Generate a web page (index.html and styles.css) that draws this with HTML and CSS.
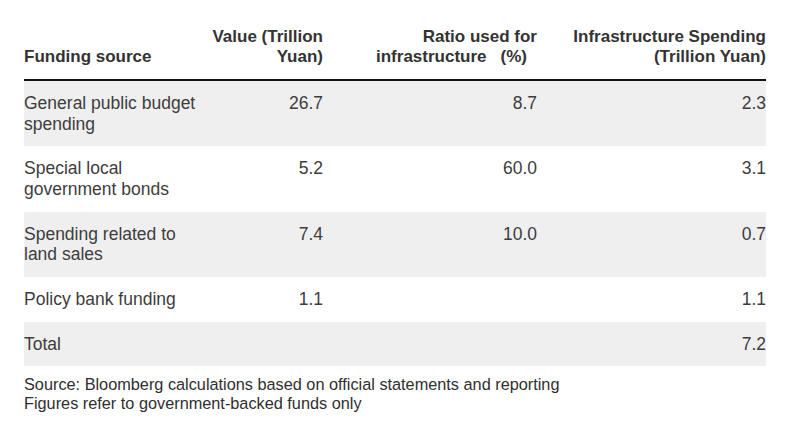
FILE: index.html
```html
<!DOCTYPE html>
<html>
<head>
<meta charset="utf-8">
<link rel="stylesheet" href="styles.css">
</head>
<body>
<div class="wrap">
  <div class="table">
    <div class="row head">
      <div class="cell first">Funding source</div>
      <div class="cell num">Value (Trillion Yuan)</div>
      <div class="cell num">Ratio used for<br>infrastructure<span class="pct">(%)</span></div>
      <div class="cell num">Infrastructure Spending (Trillion Yuan)</div>
    </div>
    <div class="row shade">
      <div class="cell first">General public budget spending</div>
      <div class="cell num">26.7</div>
      <div class="cell num">8.7</div>
      <div class="cell num">2.3</div>
    </div>
    <div class="row">
      <div class="cell first">Special local government bonds</div>
      <div class="cell num">5.2</div>
      <div class="cell num">60.0</div>
      <div class="cell num">3.1</div>
    </div>
    <div class="row shade">
      <div class="cell first">Spending related to land sales</div>
      <div class="cell num">7.4</div>
      <div class="cell num">10.0</div>
      <div class="cell num">0.7</div>
    </div>
    <div class="row">
      <div class="cell first">Policy bank funding</div>
      <div class="cell num">1.1</div>
      <div class="cell num"></div>
      <div class="cell num">1.1</div>
    </div>
    <div class="row shade">
      <div class="cell first">Total</div>
      <div class="cell num"></div>
      <div class="cell num"></div>
      <div class="cell num">7.2</div>
    </div>
  </div>
  <div class="notes">
    <p>Source: Bloomberg calculations based on official statements and reporting</p>
    <p>Figures refer to government-backed funds only</p>
  </div>
</div>
</body>
</html>
```

FILE: styles.css
```css
html, body {
  margin: 0;
  padding: 0;
  background: #ffffff;
}
body {
  font-family: "Liberation Sans", Arial, sans-serif;
  color: #3d3d3d;
}
.wrap {
  padding: 27px 34px 0 24px;
}
.table {
  width: 742px;
}
.row {
  display: grid;
  grid-template-columns: 182px 117px 214px 229px;
  font-size: 17.5px;
  line-height: 20.5px;
}
.row .cell {
  padding: 12px 0 12.3px 0;
}
.row.shade {
  background: #efefef;
}
.head {
  font-weight: bold;
  font-size: 17px;
  line-height: 20px;
  color: #333333;
  border-bottom: 2px solid #111111;
  align-items: end;
}
.head .cell {
  padding: 0 0 12px 0;
}
.pct {
  display: inline-block;
  margin-left: 14px;
  margin-right: 10px;
}
.num {
  text-align: right;
}
.notes {
  margin-top: 9px;
  font-size: 16.3px;
  line-height: 19px;
  color: #2f2f2f;
}
.notes p {
  margin: 0;
}
```
